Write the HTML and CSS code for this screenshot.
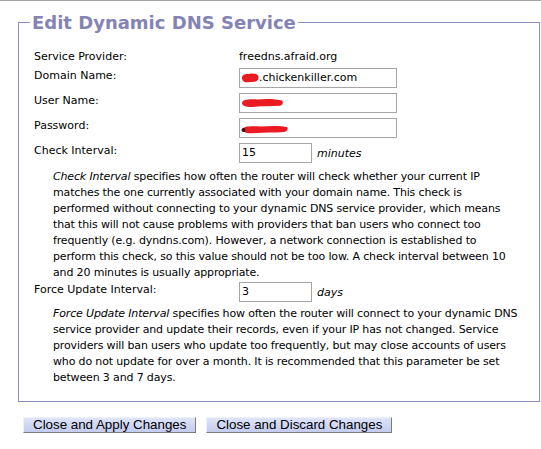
FILE: index.html
```html
<!DOCTYPE html>
<html>
<head>
<meta charset="utf-8">
<title>Edit Dynamic DNS Service</title>
<link rel="stylesheet" href="styles.css">
</head>
<body>
<div class="page">
  <fieldset class="panel">
    <legend class="panel-title">Edit Dynamic DNS Service</legend>

    <div class="row row-text">
      <span class="label">Service Provider:</span>
      <span class="value">freedns.afraid.org</span>
    </div>

    <div class="row">
      <span class="label">Domain Name:</span>
      <div class="field field-wide">
        <svg class="redact" width="18" height="12" viewBox="0 0 18 12"><path d="M1 6.5 C0.5 3 4 1.5 8 2 C12 1 17 1.5 17.5 5 C18 9 14 10.5 9 10 C5 11 1.5 10 1 6.5Z" fill="#ea1a22"/></svg><span>.chickenkiller.com</span>
      </div>
    </div>

    <div class="row">
      <span class="label">User Name:</span>
      <div class="field field-wide">
        <svg class="redact" width="43" height="12" viewBox="0 0 43 12"><path d="M1 6 C1.5 2.5 8 2 16 2.5 C25 1.5 36 2 41 3.5 C42.5 5.5 42 8 39 8.8 C30 9.5 22 9 14 9.8 C7 10.5 1 9.5 1 6Z" fill="#ea1a22"/></svg>
      </div>
    </div>

    <div class="row">
      <span class="label">Password:</span>
      <div class="field field-wide">
        <svg class="redact redact-low" width="48" height="12" viewBox="0 0 48 12"><path d="M2 6 C2.5 3 10 3 20 3.5 C30 2.5 42 2.8 46 4 C47.5 6 46.5 8.5 43 9 C33 9.8 22 9.5 12 10.2 C6 10.8 2 9.5 2 6Z" fill="#ea1a22"/><circle cx="2.5" cy="7" r="2" fill="#3a1010"/></svg>
      </div>
    </div>

    <div class="row">
      <span class="label">Check Interval:</span>
      <div class="field-line">
        <div class="field field-short">15</div>
        <span class="unit">minutes</span>
      </div>
    </div>

    <p class="help help-first"><em>Check Interval</em> specifies how often the router will check whether your current IP<br>matches the one currently associated with your domain name. This check is<br>performed without connecting to your dynamic DNS service provider, which means<br>that this will not cause problems with providers that ban users who connect too<br>frequently (e.g. dyndns.com). However, a network connection is established to<br>perform this check, so this value should not be too low. A check interval between 10<br>and 20 minutes is usually appropriate.</p>

    <div class="row row-force">
      <span class="label">Force Update Interval:</span>
      <div class="field-line">
        <div class="field field-short">3</div>
        <span class="unit">days</span>
      </div>
    </div>

    <p class="help help-second"><em>Force Update Interval</em> specifies how often the router will connect to your dynamic DNS<br>service provider and update their records, even if your IP has not changed. Service<br>providers will ban users who update too frequently, but may close accounts of users<br>who do not update for over a month. It is recommended that this parameter be set<br>between 3 and 7 days.</p>
  </fieldset>

  <div class="actions">
    <button class="btn" type="button">Close and Apply Changes</button>
    <button class="btn" type="button">Close and Discard Changes</button>
  </div>
</div>
</body>
</html>
```

FILE: styles.css
```css
html, body {
  margin: 0;
  padding: 0;
  background: #ffffff;
}

body {
  font-family: "DejaVu Sans", Verdana, sans-serif;
  font-size: 11px;
  color: #000000;
}

.page {
  border-top: 1px solid #a4a4a4;
  padding-top: 11px;
  width: 541px;
  box-sizing: border-box;
}

.panel {
  margin: 0 1px 0 18px;
  padding: 17px 15px 15px 15px;
  border: 1px solid #8c8cbd;
  min-width: 0;
}

.panel-title {
  margin-left: -4px;
  padding: 0 2px;
  font-family: "DejaVu Sans", Verdana, sans-serif;
  font-weight: bold;
  font-size: 18px;
  line-height: 21px;
  color: #8383b5;
}

.row {
  display: grid;
  grid-template-columns: 205px auto;
  align-items: start;
  margin-top: 5px;
}

.row-text {
  margin-top: 0;
  line-height: 13px;
}

.label {
  display: block;
  padding-top: 1px;
  line-height: 13px;
}

.row-text .label {
  padding-top: 0;
}

.value {
  line-height: 13px;
}

.field {
  box-sizing: border-box;
  height: 20px;
  border: 1px solid #a6a6a6;
  padding: 0 2px;
  line-height: 18px;
  display: flex;
  align-items: center;
  background: #ffffff;
}

.field-wide {
  width: 158px;
}

.field-short {
  width: 73px;
}

.field-line {
  display: flex;
  align-items: center;
}

.unit {
  font-style: italic;
  margin-left: 5px;
}

.redact {
  display: block;
  flex: none;
  margin-left: -1px;
}

.redact-low {
  margin-top: 2px;
}

.help {
  margin: 6px 0 0 19px;
  white-space: nowrap;
  line-height: 16px;
  letter-spacing: -0.15px;
}

.row-force {
  margin-top: 1px;
}

.help-second {
  margin-top: 4px;
  margin-bottom: 0;
}

.actions {
  display: flex;
  gap: 10px;
  margin: 15px 0 0 23px;
}

.btn {
  font-family: "Liberation Sans", Arial, sans-serif;
  font-size: 10pt;
  line-height: 14px;
  height: 16px;
  padding: 0 9px;
  margin: 0;
  color: #000000;
  background: linear-gradient(#dfe4f8, #c3cbef);
  border-style: solid;
  border-width: 1px;
  border-color: #eef0fa #7c7c7c #7c7c7c #eef0fa;
  border-radius: 0;
}
```
